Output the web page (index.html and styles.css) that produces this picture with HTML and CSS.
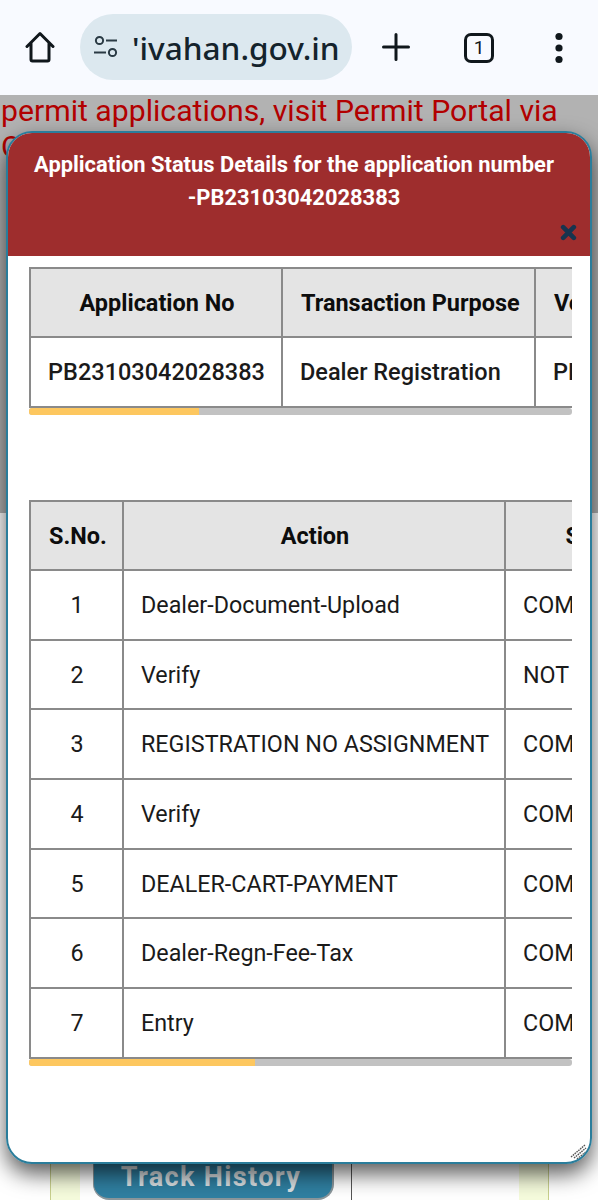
FILE: index.html
```html
<!DOCTYPE html>
<html lang="en">
<head>
<meta charset="utf-8">
<title>Application Status</title>
<link rel="stylesheet" href="styles.css">
</head>
<body>
<header class="toolbar">
  <svg class="ico-home" viewBox="0 0 30 32" width="30" height="32"><path d="M2 15.5 15 2.5l13 13M6 12v16.5a1.5 1.5 0 0 0 1.5 1.5h15a1.5 1.5 0 0 0 1.5-1.5V12" fill="none" stroke="#10171c" stroke-width="3" stroke-linejoin="round" stroke-linecap="round"/></svg>
  <div class="pill">
    <svg class="ico-tune" viewBox="0 0 26 26" width="26" height="26"><g fill="none" stroke="#2a3a44" stroke-width="2"><circle cx="6.5" cy="6.5" r="3.6"/><path d="M13 6.5h11M1 18.5h12"/><circle cx="19.5" cy="18.5" r="3.6"/></g></svg>
    <span class="url">'ivahan.gov.in</span>
  </div>
  <svg class="ico-plus" viewBox="0 0 28 28" width="28" height="28"><path d="M14 1.5v25M1.5 14h25" stroke="#10171c" stroke-width="3" stroke-linecap="round"/></svg>
  <div class="tabs">1</div>
  <svg class="ico-dots" viewBox="0 0 10 32" width="10" height="32"><circle cx="5" cy="4.5" r="3.6" fill="#10171c"/><circle cx="5" cy="16" r="3.6" fill="#10171c"/><circle cx="5" cy="27.5" r="3.6" fill="#10171c"/></svg>
</header>

<main class="page">
  <div class="notice">permit applications, visit Permit Portal via<br>Online</div>
  <div class="bottom-row">
    <div class="strip strip-left"></div>
    <div class="track-btn">Track History</div>
    <div class="divider"></div>
    <div class="strip strip-right"></div>
  </div>
  <div class="overlay"></div>

  <section class="modal">
    <div class="modal-head">
      <h1 class="modal-title">Application Status Details for the application number -PB23103042028383</h1>
      <svg class="ico-close" viewBox="0 0 16 16" width="17" height="17"><path d="M3 3l10 10M13 3 3 13" stroke="#17344f" stroke-width="4.4" stroke-linecap="round"/></svg>
    </div>
    <div class="modal-body">
      <div class="scroller">
        <table class="grid grid-a">
          <thead>
            <tr><th class="c-app">Application No</th><th class="c-purpose">Transaction Purpose</th><th class="c-veh">Vehicle No</th></tr>
          </thead>
          <tbody>
            <tr class="strong"><td class="ctr">PB23103042028383</td><td>Dealer Registration</td><td>PB10</td></tr>
          </tbody>
        </table>
      </div>
      <div class="bar"><div class="thumb thumb-a"></div></div>

      <div class="scroller second">
        <table class="grid grid-b">
          <thead>
            <tr><th class="c-no">S.No.</th><th class="c-action">Action</th><th class="c-status">Status</th></tr>
          </thead>
          <tbody>
            <tr><td class="ctr">1</td><td>Dealer-Document-Upload</td><td>COMPLETED</td></tr>
            <tr><td class="ctr">2</td><td>Verify</td><td>NOT COMPLETED</td></tr>
            <tr><td class="ctr">3</td><td>REGISTRATION NO ASSIGNMENT</td><td>COMPLETED</td></tr>
            <tr><td class="ctr">4</td><td>Verify</td><td>COMPLETED</td></tr>
            <tr><td class="ctr">5</td><td>DEALER-CART-PAYMENT</td><td>COMPLETED</td></tr>
            <tr><td class="ctr">6</td><td>Dealer-Regn-Fee-Tax</td><td>COMPLETED</td></tr>
            <tr><td class="ctr">7</td><td>Entry</td><td>COMPLETED</td></tr>
          </tbody>
        </table>
      </div>
      <div class="bar"><div class="thumb thumb-b"></div></div>
    </div>
    <svg class="ico-resize" viewBox="0 0 18 18" width="18" height="18"><path d="M1 15 15 3M4 16 16 6M7 17 17 9M11 17l6-5" stroke="#555" stroke-width="1.4" stroke-dasharray="1.6 .8"/></svg>
  </section>
</main>
</body>
</html>
```
FILE: styles.css
```css
* { box-sizing: border-box; }
html, body { margin: 0; padding: 0; }
body {
  width: 598px;
  height: 1200px;
  overflow: hidden;
  background: #fff;
  font-family: Roboto, "Liberation Sans", sans-serif;
}

/* browser toolbar */
.toolbar {
  height: 95px;
  background: #f8faff;
  display: flex;
  align-items: flex-start;
  position: relative;
}
.ico-home { margin: 31px 0 0 25px; flex: none; }
.pill {
  margin: 14px 0 0 25px;
  width: 272px;
  height: 66px;
  border-radius: 33px;
  background: #dce8ef;
  display: flex;
  align-items: center;
  padding-left: 13px;
  flex: none;
}
.ico-tune { flex: none; }
.url {
  margin-left: 13px;
  font-family: "Noto Sans", sans-serif;
  font-weight: 500;
  font-size: 31.6px;
  color: #14232c;
  white-space: nowrap;
}
.ico-plus { margin: 33px 0 0 30px; flex: none; }
.tabs {
  margin: 33px 0 0 54px;
  width: 30px;
  height: 30px;
  border: 3px solid #10171c;
  border-radius: 7px;
  font-size: 19px;
  line-height: 24px;
  text-align: center;
  color: #10171c;
  flex: none;
}
.ico-dots { margin: 32px 0 0 60px; flex: none; }

/* page behind the dialog */
.page {
  position: relative;
  height: 1105px;
  overflow: hidden;
  display: flex;
  flex-direction: column;
  justify-content: space-between;
  background: #fff;
}
.notice {
  padding-left: 1px;
  font-size: 30.2px;
  line-height: 36px;
  color: #ff0000;
  white-space: nowrap;
  margin-top: -2px;
}
.overlay {
  position: absolute;
  left: 0;
  right: 0;
  top: 0;
  height: 418px;
  background: rgba(0, 0, 0, .3);
}
.bottom-row {
  height: 50px;
  display: flex;
  position: relative;
}
.strip {
  width: 30px;
  background: #f5fbdc;
  flex: none;
}
.strip-left { margin-left: 50px; border-left: 1px solid #c8d08c; }
.strip-right { margin-left: 167px; border-right: 1px solid #c8d08c; }
.track-btn {
  margin-left: 13px;
  width: 241px;
  height: 50px;
  padding: 6px 4px 0 0;
  background: #2f7fa1;
  border: 2px solid #8a969b;
  border-width: 0 2px 2px 1px;
  border-radius: 0 0 16px 16px;
  color: #d9dfe2;
  font-size: 27px;
  font-weight: 700;
  letter-spacing: 1.35px;
  text-align: center;
  line-height: 42px;
  white-space: nowrap;
  flex: none;
}
.divider {
  margin-left: 17px;
  width: 1px;
  background: #555;
  flex: none;
}

/* dialog */
.modal {
  position: absolute;
  left: 6px;
  top: 36px;
  width: 586px;
  height: 1033px;
  background: #fff;
  border: 2px solid #2a7d9b;
  border-radius: 26px;
  overflow: hidden;
  z-index: 1;
}
.page::after {
  content: "";
  position: absolute;
  left: 6px;
  top: 36px;
  width: 586px;
  height: 1033px;
  border-radius: 26px;
  box-shadow: 0 10px 22px rgba(0, 0, 0, .65);
  z-index: 0;
}
.modal-head {
  position: relative;
  height: 123px;
  background: #9e2d2d;
  padding: 16px 30px 0 20px;
}
.modal-title {
  margin: 0;
  color: #fff;
  font-size: 21.9px;
  font-weight: 700;
  line-height: 32.5px;
  text-align: center;
}
.ico-close {
  position: absolute;
  right: 13px;
  bottom: 15px;
}
.modal-body {
  padding: 11px 18px 0 21px;
}
.scroller {
  overflow: hidden;
  width: 543px;
}
.second { margin-top: 85px; }
.grid {
  border-collapse: collapse;
  table-layout: fixed;
  border: 2px solid #8a8a8a;
  font-size: 23.3px;
  color: #1a1a1a;
}
.grid th, .grid td {
  border: 2px solid #8a8a8a;
  height: 70px;
  padding: 0 16px 0 17px;
  white-space: nowrap;
  overflow: hidden;
  font-weight: 400;
}
.grid th {
  height: 69px;
  background: #e4e4e4;
  font-size: 23.45px;
  font-weight: 700;
  color: #0d0d0d;
  text-align: center;
  padding-left: 18px;
}
.grid-a { width: 654px; }
.grid-b { width: 662px; }
.c-app { width: 252px; }
.c-purpose { width: 253px; }
.c-veh { width: 149px; }
.c-no { width: 93px; }
.c-action { width: 382px; }
.c-status { width: 187px; }
.ctr { text-align: center; }
.grid .strong td { font-weight: 500; font-size: 23.5px; }
.grid-b td { height: 69.7px; }
.bar {
  width: 543px;
  height: 7px;
  background: #c2c2c2;
  border-radius: 3px;
}
.thumb {
  height: 7px;
  background: #fdc75f;
  border-radius: 3px 0 0 3px;
}
.thumb-a { width: 170px; }
.thumb-b { width: 226px; }
.ico-resize {
  position: absolute;
  right: 2px;
  bottom: 2px;
}
```
